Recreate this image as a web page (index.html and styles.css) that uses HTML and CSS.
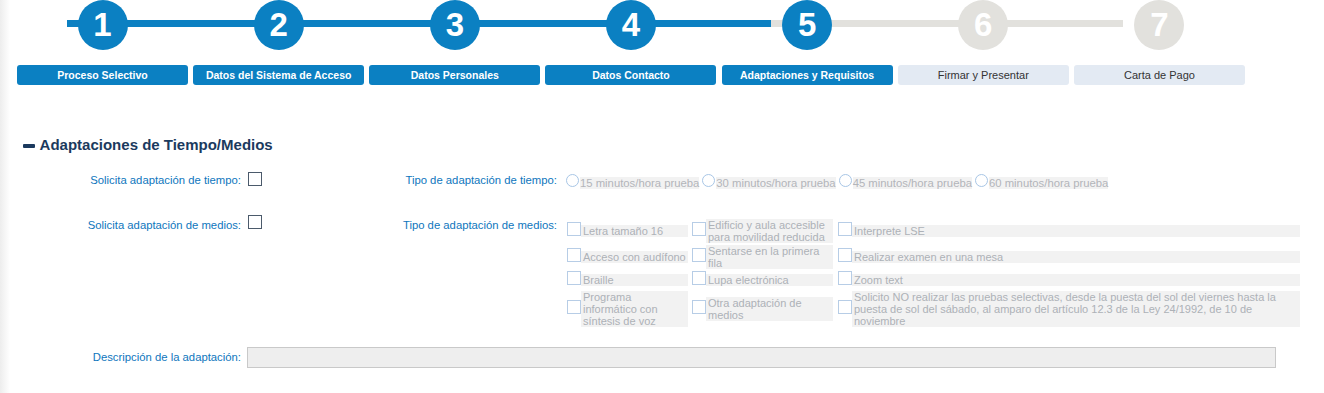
FILE: index.html
```html
<!DOCTYPE html>
<html lang="es">
<head>
    <meta charset="UTF-8">
    <meta name="viewport" content="width=device-width, initial-scale=1.0">
    <title>Adaptaciones y Requisitos</title>
    <link rel="stylesheet" href="styles.css">
</head>
<body>
    <div class="steps">
        <div class="step done"><div class="num">1</div><div class="tab">Proceso Selectivo</div></div>
        <div class="step done"><div class="num">2</div><div class="tab">Datos del Sistema de Acceso</div></div>
        <div class="step done"><div class="num">3</div><div class="tab">Datos Personales</div></div>
        <div class="step done"><div class="num">4</div><div class="tab">Datos Contacto</div></div>
        <div class="step current"><div class="num">5</div><div class="tab">Adaptaciones y Requisitos</div></div>
        <div class="step todo"><div class="num">6</div><div class="tab">Firmar y Presentar</div></div>
        <div class="step todo"><div class="num">7</div><div class="tab">Carta de Pago</div></div>
    </div>

    <h2 class="sec-title"><span class="minus"></span> Adaptaciones de Tiempo/Medios</h2>

    <div class="row row-time">
        <label class="lbl">Solicita adaptación de tiempo:</label>
        <div class="fld"><input type="checkbox" class="chk"></div>
        <label class="lbl">Tipo de adaptación de tiempo:</label>
        <div class="radios">
            <input type="radio" name="tiempo" disabled><span>15 minutos/hora prueba</span>
            <input type="radio" name="tiempo" disabled><span>30 minutos/hora prueba</span>
            <input type="radio" name="tiempo" disabled><span>45 minutos/hora prueba</span>
            <input type="radio" name="tiempo" disabled><span>60 minutos/hora prueba</span>
        </div>
    </div>

    <div class="row row-media">
        <label class="lbl">Solicita adaptación de medios:</label>
        <div class="fld"><input type="checkbox" class="chk"></div>
        <label class="lbl">Tipo de adaptación de medios:</label>
        <div class="opts">
            <div class="opt"><input type="checkbox" disabled><span>Letra tamaño 16</span></div>
            <div class="opt"><input type="checkbox" disabled><span>Edificio y aula accesible para movilidad reducida</span></div>
            <div class="opt"><input type="checkbox" disabled><span>Interprete LSE</span></div>
            <div class="opt"><input type="checkbox" disabled><span>Acceso con audífono</span></div>
            <div class="opt"><input type="checkbox" disabled><span>Sentarse en la primera fila</span></div>
            <div class="opt"><input type="checkbox" disabled><span>Realizar examen en una mesa</span></div>
            <div class="opt"><input type="checkbox" disabled><span>Braille</span></div>
            <div class="opt"><input type="checkbox" disabled><span>Lupa electrónica</span></div>
            <div class="opt"><input type="checkbox" disabled><span>Zoom text</span></div>
            <div class="opt"><input type="checkbox" disabled><span>Programa informático con síntesis de voz</span></div>
            <div class="opt"><input type="checkbox" disabled><span>Otra adaptación de medios</span></div>
            <div class="opt"><input type="checkbox" disabled><span>Solicito NO realizar las pruebas selectivas, desde la puesta del sol del viernes hasta la puesta de sol del sábado, al amparo del artículo 12.3 de la Ley 24/1992, de 10 de noviembre</span></div>
        </div>
    </div>

    <div class="row row-desc">
        <label class="lbl">Descripción de la adaptación:</label>
        <input type="text" class="desc" disabled>
    </div>
</body>
</html>
```

FILE: styles.css
```css
body {
    margin: 0;
    min-height: 393px;
    font-family: "Liberation Sans", Arial, sans-serif;
    background: linear-gradient(to right, #ededed 0, #ffffff 10px);
    color: #333;
}

/* stepper */
.steps {
    display: grid;
    grid-template-columns: repeat(7, 171px);
    column-gap: 5.17px;
    padding-left: 17px;
}
.step {
    position: relative;
}
.step::before {
    content: "";
    position: absolute;
    top: 20px;
    left: calc(50% - 36px);
    width: 176.17px;
    height: 7px;
    background: #e2e1dd;
}
.step.done::before {
    background: #0b80c2;
}
.step:last-child::before {
    display: none;
}
.num {
    position: relative;
    width: 50px;
    height: 50px;
    margin: 0 auto;
    border-radius: 50%;
    background: #0b80c2;
    color: #fff;
    font-size: 33px;
    font-weight: bold;
    line-height: 50px;
    text-align: center;
}
.step.todo .num {
    background: #e2e1dd;
}
.tab {
    margin-top: 15px;
    height: 20px;
    border-radius: 3px;
    background: #0b80c2;
    color: #fff;
    font-size: 10.5px;
    font-weight: bold;
    line-height: 20px;
    text-align: center;
    white-space: nowrap;
}
.step.todo .tab {
    background: #e3eaf3;
    color: #333;
    font-size: 11px;
    font-weight: normal;
}

/* section title */
.sec-title {
    margin: 51px 0 18px;
    padding-left: 23px;
    font-size: 15px;
    font-weight: bold;
    line-height: 18px;
    color: #1b3a5e;
}
.minus {
    display: inline-block;
    width: 12px;
    height: 4px;
    margin-right: 1px;
    border-radius: 1px;
    background: #1b3a5e;
    vertical-align: middle;
}

/* form rows */
.row {
    display: grid;
    grid-template-columns: 241px 159px 157px 1fr;
    align-items: start;
    padding-right: 20px;
    font-size: 11px;
}
.row-time {
    margin-bottom: 26px;
}
.row-media {
    margin-bottom: 20px;
}
.row-media .lbl {
    margin-top: 2px;
}
.lbl {
    text-align: right;
    color: #0e76bd;
    font-size: 11.3px;
    line-height: 16px;
    white-space: nowrap;
}
.chk {
    appearance: none;
    display: block;
    width: 14px;
    height: 14px;
    margin: 0 0 0 7px;
    border: 1px solid #4b5a6b;
    background: #fff;
}

.radios {
    display: flex;
    align-items: flex-start;
    padding-left: 9px;
}
.radios input {
    appearance: none;
    flex: none;
    width: 13px;
    height: 13px;
    margin: 2px 1px 0 0;
    border: 1px solid #a8c6e6;
    border-radius: 50%;
    background: #fff;
}
.radios span {
    margin: 5px 3px 0 0;
    font-size: 11.3px;
    line-height: 12px;
    background: #f2f2f2;
    color: #b2b5ba;
    white-space: nowrap;
}

.opts {
    display: grid;
    grid-template-columns: 125px 146px 1fr;
    row-gap: 2px;
    margin-top: 4px;
    padding-left: 9px;
}
.opt {
    display: flex;
    align-items: center;
}
.opt input {
    appearance: none;
    flex: none;
    width: 14px;
    height: 14px;
    margin: 0 0 4px 1px;
    border: 1px solid #b7cde6;
    background: #fff;
}
.opt span {
    flex: 1;
    margin-right: 4px;
    padding: 0 1px 0 2px;
    line-height: 12px;
    background: #f2f2f2;
    color: #adb1b7;
}
.opt:nth-child(3n+1) span {
    margin-right: 3px;
}

.row-desc .lbl {
    line-height: 21px;
}
.desc {
    grid-column: 2 / 5;
    box-sizing: border-box;
    width: 1029px;
    height: 21px;
    margin: 0 0 0 6px;
    padding: 0;
    border: 1px solid #c9c9c9;
    background: #eeeeee;
}
```
